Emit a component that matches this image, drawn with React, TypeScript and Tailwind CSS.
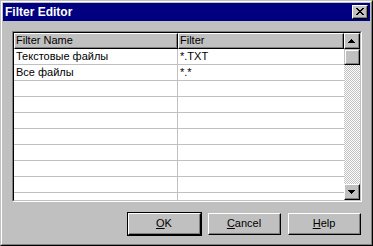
import React from 'react';

const rows: [string, string][] = [
  ['Текстовые файлы', '*.TXT'],
  ['Все файлы', '*.*'],
  ['', ''],
  ['', ''],
  ['', ''],
  ['', ''],
  ['', ''],
  ['', ''],
  ['', ''],
  ['', ''],
];

function Arrow({ down }: { down?: boolean }) {
  return (
    <svg width="7" height="4" viewBox="0 0 7 4" shapeRendering="crispEdges">
      {down ? (
        <path d="M0 0h7v1H0zM1 1h5v1H1zM2 2h3v1H2zM3 3h1v1H3z" fill="#000" />
      ) : (
        <path d="M3 0h1v1H3zM2 1h3v1H2zM1 2h5v1H1zM0 3h7v1H0z" fill="#000" />
      )}
    </svg>
  );
}

function ScrollButton({ down }: { down?: boolean }) {
  return (
    <div className="h-[16px] w-[16px] border border-t-white border-l-white border-r-black border-b-black bg-[#c0c0c0]">
      <div className="flex h-full w-full items-center justify-center border-r border-b border-r-[#808080] border-b-[#808080]">
        <Arrow down={down} />
      </div>
    </div>
  );
}

function Button({
  children,
  primary,
}: {
  children: React.ReactNode;
  primary?: boolean;
}) {
  return (
    <div
      className={
        'h-[24px] w-[75px] ' + (primary ? 'border border-black' : 'border border-transparent')
      }
    >
      <div className="h-full w-full border border-t-white border-l-white border-r-black border-b-black bg-[#c0c0c0]">
        <div className="flex h-full w-full items-center justify-center border-r border-b border-r-[#808080] border-b-[#808080] text-[11px] text-black">
          {children}
        </div>
      </div>
    </div>
  );
}

export default function App() {
  return (
    <div
      className="h-[246px] w-[373px] border border-t-[#c0c0c0] border-l-[#c0c0c0] border-r-black border-b-black bg-[#c0c0c0]"
      style={{ fontFamily: '"Liberation Sans", Arial, sans-serif' }}
    >
      <div className="flex h-full w-full flex-col border border-t-white border-l-white border-r-[#808080] border-b-[#808080] p-px">
        {/* title bar */}
        <div className="flex h-[18px] items-center justify-between bg-[#000080] pl-[2px] pr-[2px]">
          <span className="text-[12px] font-bold text-white leading-none">Filter Editor</span>
          <div className="h-[14px] w-[16px] border border-t-white border-l-white border-r-black border-b-black bg-[#c0c0c0]">
            <div className="flex h-full w-full items-center justify-center border-r border-b border-r-[#808080] border-b-[#808080]">
              <svg width="8" height="7" viewBox="0 0 8 7" shapeRendering="crispEdges">
                <path
                  d="M0 0h2v1H0zM6 0h2v1H6zM1 1h2v1H1zM5 1h2v1H5zM2 2h4v1H2zM3 3h2v1H3zM2 4h4v1H2zM1 5h2v1H1zM5 5h2v1H5zM0 6h2v1H0zM6 6h2v1H6z"
                  fill="#000"
                />
              </svg>
            </div>
          </div>
        </div>

        {/* list view */}
        <div className="ml-[9px] mt-[10px] h-[171px] w-[350px] border border-t-[#808080] border-l-[#808080] border-r-white border-b-white">
          <div className="flex h-full w-full border border-t-black border-l-black border-r-[#c0c0c0] border-b-[#c0c0c0] bg-white">
            <div className="flex-1 overflow-hidden">
              <div className="flex h-[16px] text-[11px] text-black">
                <div className="w-[164px] border border-t-white border-l-white border-r-black border-b-black bg-[#c0c0c0]">
                  <div className="h-full border-r border-b border-r-[#808080] border-b-[#808080] pl-[1px] leading-[13px]">
                    Filter Name
                  </div>
                </div>
                <div className="flex-1 border border-t-white border-l-white border-r-black border-b-black bg-[#c0c0c0]">
                  <div className="h-full border-r border-b border-r-[#808080] border-b-[#808080] pl-[1px] leading-[13px]">
                    Filter
                  </div>
                </div>
              </div>
              {rows.map((r, i) => (
                <div key={i} className="flex h-[16px] border-b border-[#c0c0c0] text-[11px] text-black">
                  <div className="w-[164px] border-r border-[#c0c0c0] pl-[2px] leading-[15px] whitespace-nowrap">
                    {r[0]}
                  </div>
                  <div className="flex-1 pl-[2px] leading-[15px] whitespace-nowrap">{r[1]}</div>
                </div>
              ))}
            </div>
            {/* scrollbar */}
            <div className="flex w-[16px] flex-col">
              <ScrollButton />
              <div className="h-[16px] w-[16px] border border-t-[#c0c0c0] border-l-[#c0c0c0] border-r-black border-b-black bg-[#c0c0c0]">
                <div className="h-full w-full border border-t-white border-l-white border-r-[#808080] border-b-[#808080]" />
              </div>
              <div className="flex-1 bg-[repeating-conic-gradient(#c0c0c0_0_25%,#ffffff_0_50%)] bg-[length:2px_2px]" />
              <ScrollButton down />
            </div>
          </div>
        </div>

        {/* buttons */}
        <div className="mt-[10px] flex w-[359px] justify-end gap-[5px]">
          <Button primary>
            <span>
              <span className="underline underline-offset-1">O</span>K
            </span>
          </Button>
          <Button>
            <span>
              <span className="underline underline-offset-1">C</span>ancel
            </span>
          </Button>
          <Button>
            <span>
              <span className="underline underline-offset-1">H</span>elp
            </span>
          </Button>
        </div>
      </div>
    </div>
  );
}
